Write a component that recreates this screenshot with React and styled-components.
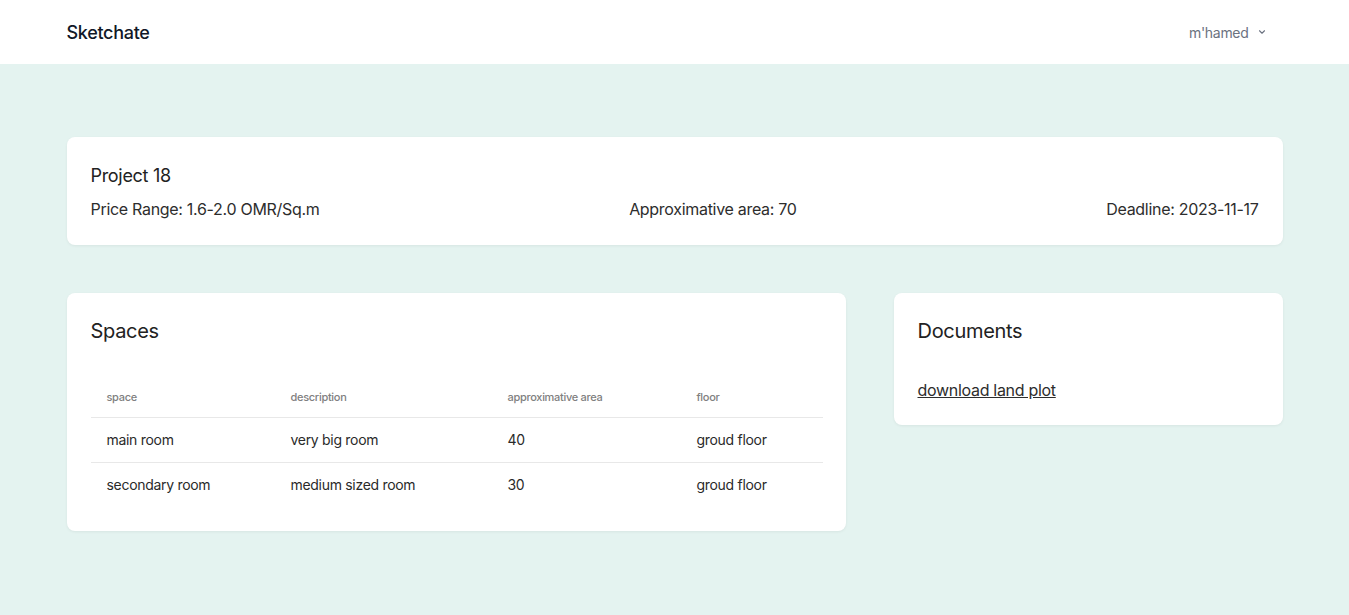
import styled, { createGlobalStyle } from "styled-components";

const SPACES = [
  { space: "main room", description: "very big room", area: 40, floor: "groud floor" },
  { space: "secondary room", description: "medium sized room", area: 30, floor: "groud floor" },
];

const COLUMNS = [
  { label: "space", width: 184 },
  { label: "description", width: 217 },
  { label: "approximative area", width: 189 },
  { label: "floor", width: 142 },
];

const GlobalStyle = createGlobalStyle`
  body {
    margin: 0;
    background: #e4f3f0;
    font-family: Inter, "Noto Sans", sans-serif;
    color: #2d2d2d;
    letter-spacing: -0.3px;
  }
`;

export default function App() {
  return (
    <>
      <GlobalStyle />
      <Header>
        <HeaderInner>
          <Brand>Sketchate</Brand>
          <UserMenu>
            m'hamed
            <svg width="10" height="10" viewBox="0 0 24 24" fill="none" stroke="currentColor" strokeWidth="2.6" strokeLinecap="round" strokeLinejoin="round">
              <path d="M6 9l6 6 6-6" />
            </svg>
          </UserMenu>
        </HeaderInner>
      </Header>

      <Main>
        <Card>
          <ProjectTitle>Project 18</ProjectTitle>
          <InfoRow>
            <span>Price Range: 1.6-2.0 OMR/Sq.m</span>
            <span>Approximative area: 70</span>
            <span>Deadline: 2023-11-17</span>
          </InfoRow>
        </Card>

        <Columns>
          <Card>
            <SectionTitle>Spaces</SectionTitle>
            <Table>
              <colgroup>
                {COLUMNS.map((c) => (
                  <col key={c.label} style={{ width: c.width }} />
                ))}
              </colgroup>
              <thead>
                <tr>
                  {COLUMNS.map((c) => (
                    <Th key={c.label}>{c.label}</Th>
                  ))}
                </tr>
              </thead>
              <tbody>
                {SPACES.map((s) => (
                  <tr key={s.space}>
                    <Td>{s.space}</Td>
                    <Td>{s.description}</Td>
                    <Td>{s.area}</Td>
                    <Td>{s.floor}</Td>
                  </tr>
                ))}
              </tbody>
            </Table>
          </Card>

          <Card>
            <SectionTitle>Documents</SectionTitle>
            <DocLink href="#">download land plot</DocLink>
          </Card>
        </Columns>
      </Main>
    </>
  );
}

const Header = styled.header`
  background: #fff;
  height: 64px;
`;

const HeaderInner = styled.div`
  max-width: 1216px;
  height: 100%;
  margin: 0 auto;
  padding: 0 16px 0 0;
  box-sizing: border-box;
  display: flex;
  align-items: center;
  justify-content: space-between;
`;

const Brand = styled.div`
  font-size: 18px;
  font-weight: 500;
  color: #111827;
`;

const UserMenu = styled.div`
  display: flex;
  align-items: center;
  gap: 8px;
  font-size: 14px;
  color: #6b7280;
`;

const Main = styled.main`
  max-width: 1216px;
  margin: 0 auto;
  padding: 73px 0 48px;
  display: flex;
  flex-direction: column;
  gap: 48px;
`;

const Card = styled.section`
  background: #fff;
  border-radius: 8px;
  box-shadow: 0 1px 3px rgba(0, 0, 0, 0.06);
  padding: 24px;
`;

const ProjectTitle = styled.h2`
  margin: 2px 0 8px;
  font-size: 18px;
  font-weight: 400;
  line-height: 26px;
  color: #222;
`;

const InfoRow = styled.div`
  display: flex;
  justify-content: space-between;
  font-size: 16px;
  line-height: 24px;
`;

const Columns = styled.div`
  display: grid;
  grid-template-columns: 779px 1fr;
  gap: 48px;
  align-items: start;
`;

const SectionTitle = styled.h2`
  margin: 0;
  font-size: 20px;
  font-weight: 400;
  line-height: 28px;
  color: #222;
`;

const Table = styled.table`
  width: 100%;
  margin-top: 37px;
  border-collapse: collapse;
  table-layout: fixed;
  text-align: left;
`;

const Th = styled.th`
  padding: 8px 16px 13px;
  font-size: 11px;
  font-weight: 500;
  color: #808080;
  border-bottom: 1px solid #e8e8e8;
`;

const Td = styled.td`
  padding: 12px 16px;
  font-size: 14px;
  line-height: 20px;
  color: #2a2a2a;
  border-bottom: 1px solid #e8e8e8;

  tr:last-child > & {
    border-bottom: none;
  }
`;

const DocLink = styled.a`
  display: inline-block;
  margin-top: 34px;
  font-size: 16px;
  line-height: 22px;
  color: #2d2d2d;
  text-decoration: underline;
`;
